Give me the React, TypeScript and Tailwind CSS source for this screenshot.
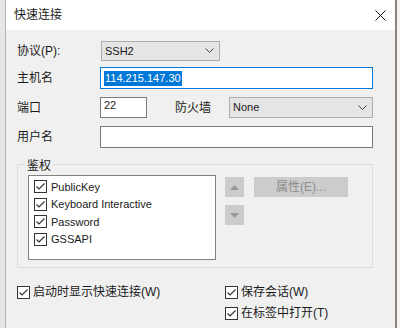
import React from "react";

const font = { fontFamily: '"Liberation Sans", "Noto Sans CJK SC", sans-serif' };

function Check() {
  return (
    <span className="w-[13px] h-[13px] border border-[#333333] bg-white flex items-center justify-center shrink-0">
      <svg width="11" height="11" viewBox="0 0 11 11">
        <polyline points="1.5,5.5 4,8 9.5,2.5" fill="none" stroke="#333333" strokeWidth="1.2" />
      </svg>
    </span>
  );
}

function Chevron() {
  return (
    <svg width="9" height="6" viewBox="0 0 9 6" className="shrink-0">
      <polyline points="0.5,0.5 4.5,4.5 8.5,0.5" fill="none" stroke="#444" strokeWidth="1" />
    </svg>
  );
}

export default function App() {
  return (
    <div className="w-[400px] h-[328px] flex bg-[#e8e8e8] overflow-hidden text-[12px] text-[#1a1a1a]" style={font}>
      <div className="w-[5px] bg-[#e6e6e6]" />
      <div className="flex-1 flex flex-col border-l border-[#b4b4b4]">
        <div className="h-[30px] bg-white flex items-center pl-[8px] pr-[9px]">
          <span className="flex-1 leading-[16px]">快速连接</span>
          <svg width="11" height="11" viewBox="0 0 11 11">
            <path d="M0.5 0.5 L10.5 10.5 M10.5 0.5 L0.5 10.5" stroke="#111" strokeWidth="1" />
          </svg>
        </div>
        <div className="flex-1 bg-[#f0f0f0] pl-[11px] pr-[22px] flex flex-col">
          <div className="mt-[11px] h-[20px] flex items-center">
            <span className="w-[84px]">协议(P):</span>
            <div className="w-[119px] h-[20px] bg-[#e5e5e5] border border-[#adadad] flex items-center pl-[3px] pr-[5px]">
              <span className="flex-1 text-[11px]">SSH2</span>
              <Chevron />
            </div>
          </div>
          <div className="mt-[6px] h-[22px] flex items-center">
            <span className="w-[83px]">主机名</span>
            <div className="flex-1 h-[22px] bg-white border border-[#0078d7] flex items-center pl-[3px]">
              <span className="bg-[#0078d7] text-white text-[11px] leading-[15px] px-px">114.215.147.30</span>
            </div>
          </div>
          <div className="mt-[8px] h-[21px] flex items-center">
            <span className="w-[83px]">端口</span>
            <div className="w-[47px] h-[21px] bg-white border border-[#7a7a7a] pl-[3px] text-[11px] leading-[14px]">22</div>
            <span className="ml-[28px] w-[54px]">防火墙</span>
            <div className="flex-1 h-[21px] bg-[#e5e5e5] border border-[#adadad] flex items-center pl-[3px] pr-[5px]">
              <span className="flex-1 text-[11px]">None</span>
              <Chevron />
            </div>
          </div>
          <div className="mt-[8px] h-[22px] flex items-center">
            <span className="w-[83px]">用户名</span>
            <div className="flex-1 h-[22px] bg-white border border-[#7a7a7a]" />
          </div>
          <div className="mt-[16px] h-[104px] border border-[#dcdcdc] relative pl-[10px] pt-[10px] flex">
            <span className="absolute left-[7px] top-[-7px] px-[2px] bg-[#f0f0f0] leading-[16px]">鉴权</span>
            <div className="w-[188px] h-[85px] bg-white border border-[#828282] pt-[2px] pl-[5px] flex flex-col">
              {["PublicKey", "Keyboard Interactive", "Password", "GSSAPI"].map((t) => (
                <div key={t} className="h-[17.5px] flex items-center gap-[4px]">
                  <Check />
                  <span className="leading-[16px] text-[11px]">{t}</span>
                </div>
              ))}
            </div>
            <div className="ml-[9px] flex flex-col gap-[8px] mt-[2px]">
              <div className="w-[19px] h-[20px] bg-[#cccccc] flex items-center justify-center">
                <svg width="9" height="5" viewBox="0 0 9 5"><polygon points="0,5 4.5,0 9,5" fill="#999" /></svg>
              </div>
              <div className="w-[19px] h-[20px] bg-[#cccccc] flex items-center justify-center">
                <svg width="9" height="5" viewBox="0 0 9 5"><polygon points="0,0 4.5,5 9,0" fill="#999" /></svg>
              </div>
            </div>
            <div className="ml-[10px] mt-[2px] w-[94px] h-[20px] bg-[#cccccc] text-[#8c8c8c] flex items-center justify-center">
              属性(E)...
            </div>
          </div>
          <div className="mt-[16px] flex">
            <div className="w-[208px] h-[16px] flex items-center gap-[3px]">
              <Check />
              <span>启动时显示快速连接(W)</span>
            </div>
            <div className="flex flex-col gap-[5px]">
              <div className="h-[16px] flex items-center gap-[3px]">
                <Check />
                <span>保存会话(W)</span>
              </div>
              <div className="h-[16px] flex items-center gap-[3px]">
                <Check />
                <span>在标签中打开(T)</span>
              </div>
            </div>
          </div>
        </div>
      </div>
      <div className="w-[2px] bg-[#8a8480]" />
      <div className="w-[3px] bg-[#f5f2f2]" />
    </div>
  );
}
